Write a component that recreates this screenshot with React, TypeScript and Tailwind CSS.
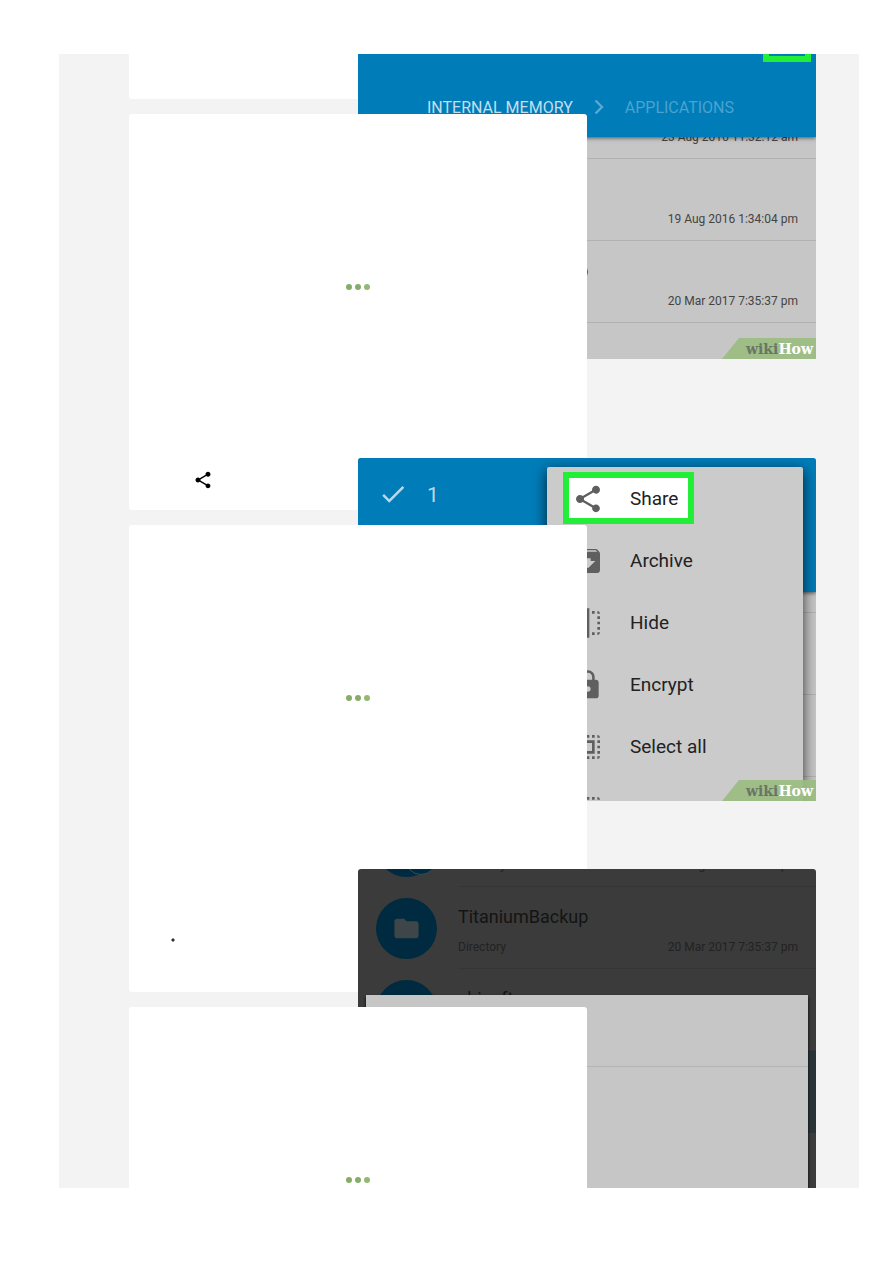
import type { ReactNode } from "react";
import {
  MdArchive,
  MdCheck,
  MdFlip,
  MdFolder,
  MdLock,
  MdSelectAll,
  MdShare,
} from "react-icons/md";

function LoadingDots() {
  return (
    <div className="flex h-[346px] items-center justify-center gap-[3px]" role="status" aria-label="Loading">
      <span className="size-[6px] rounded-full bg-[#86ad68]" />
      <span className="size-[6px] rounded-full bg-[#86ad68]" />
      <span className="size-[6px] rounded-full bg-[#93b874]" />
    </div>
  );
}

function Watermark() {
  return (
    <div className="absolute right-0 bottom-0 z-20 flex h-[21px] w-[94px] items-center justify-end bg-[#9abd80]/90 pr-[3px] font-['DejaVu_Serif',serif] text-[14px] leading-[20px] font-bold [clip-path:polygon(17px_0,100%_0,100%_100%,0_100%)]">
      <span className="text-[#6b7565]">wiki</span>
      <span className="text-white">How</span>
    </div>
  );
}

type FileRowProps = { name?: string; kind?: string; date?: string; folder?: boolean; badge?: boolean };

function FileRow({ name, kind, date, folder, badge }: FileRowProps) {
  return (
    <li className="flex h-[82px] shrink-0 items-center">
      <div className="w-[100px] shrink-0 pl-[18px]">
        {folder && (
          <div className="relative flex size-[61px] items-center justify-center rounded-full bg-[#002a40] text-[#3f4649]">
            <MdFolder className="size-[29px]" />
            {badge && (
              <span className="absolute right-0 bottom-[2px] size-[32px] rounded-full border border-[#3b4c55] bg-[#002a40]" />
            )}
          </div>
        )}
      </div>
      <div className="flex h-full flex-1 flex-col justify-end border-b border-black/10 pr-[18px] pb-[13px]">
        <span className="h-[24px] text-[18px] leading-[24px] text-[#141414]">{name}</span>
        <div className="mt-[10px] flex h-[16px] justify-between text-[12px] leading-[16px]">
          <span>{kind}</span>
          <span>{date}</span>
        </div>
      </div>
    </li>
  );
}

function BrowseIllustration() {
  return (
    <figure className="absolute top-0 left-1/2 isolate flex h-[305px] w-full flex-col overflow-hidden bg-[#c6c6c6] font-[Roboto,sans-serif]">
      <div className="relative z-10 flex h-[83px] shrink-0 items-end bg-[#007cb8] pb-[19px] pl-[69px] text-[16px] leading-[20px] shadow-[0_1px_4px_rgba(0,0,0,0.6)]">
        <span className="text-[#c3dfee]">INTERNAL MEMORY</span>
        <svg className="mx-[16px] h-[20px] w-[20px] text-[#58aad2]" viewBox="0 0 20 20" fill="none" aria-hidden="true">
          <path d="M6.5 2.5 13 9 6.5 15.5" stroke="currentColor" strokeWidth="2.4" />
        </svg>
        <span className="text-[#4ba3cf]">APPLICATIONS</span>
        <span className="absolute top-0 right-[5px] h-[8px] w-[48px] border-x-[6px] border-b-[6px] border-[#22ee38]" />
      </div>
      <ul className="flex flex-1 flex-col justify-end overflow-hidden pb-[36px] text-[#444]">
        <FileRow date="23 Aug 2016 11:32:12 am" />
        <FileRow date="19 Aug 2016 1:34:04 pm" />
        <FileRow name="TitaniumBackup" date="20 Mar 2017 7:35:37 pm" />
      </ul>
      <Watermark />
    </figure>
  );
}

const menu = [
  { label: "Share", Icon: MdShare },
  { label: "Archive", Icon: MdArchive },
  { label: "Hide", Icon: MdFlip },
  { label: "Encrypt", Icon: MdLock },
  { label: "Select all", Icon: MdSelectAll },
  { label: "Select none", Icon: MdSelectAll },
];

function MenuIllustration() {
  return (
    <figure className="absolute top-[344px] left-1/2 isolate h-[343px] w-full overflow-hidden rounded-t-[3px] bg-[#c6c6c6] font-[Roboto,sans-serif]">
      <div className="relative z-10 flex h-[134px] items-start bg-[#007cb8] pt-[21px] pl-[20px] text-[#b9d9ea] shadow-[0_1px_4px_rgba(0,0,0,0.6)]">
        <MdCheck className="size-[30px]" />
        <span className="ml-[19px] text-[21px] leading-[32px]">1</span>
      </div>
      <div className="h-[21px] border-b border-black/10" />
      <div className="h-[82px] border-b border-black/10" />
      <div className="h-[82px] border-b border-black/10" />
      <ul className="absolute top-[9px] right-[13px] z-10 w-[256px] rounded-[2px] bg-[#cbcbcb] pt-[1px] shadow-[0_4px_14px_rgba(0,0,0,0.75)]">
        {menu.map(({ label, Icon }, i) => (
          <li key={label} className="relative h-[62px]">
            {i === 0 && (
              <span className="absolute top-[4px] left-[16px] h-[52px] w-[131px] border-[6px] border-[#22ee38] bg-white" />
            )}
            <button className="relative flex h-full w-full items-center gap-[26px] pl-[25px] text-[19px] leading-[24px] text-[#222]">
              <Icon className="size-[32px] text-[#5f5f5f]" />
              {label}
            </button>
          </li>
        ))}
      </ul>
      <Watermark />
    </figure>
  );
}

function DialogIllustration() {
  return (
    <figure className="absolute top-[344px] left-1/2 isolate h-[343px] w-full overflow-hidden rounded-t-[3px] bg-[#3b3b3b] font-[Roboto,sans-serif]">
      <ul className="flex h-[182px] flex-col justify-end text-[#222]">
        <FileRow folder badge kind="Directory" date="19 Aug 2016 1:34:04 pm" />
        <FileRow folder name="TitaniumBackup" kind="Directory" date="20 Mar 2017 7:35:37 pm" />
        <FileRow folder name="shisoft" />
      </ul>
      <div className="h-[82px] bg-[#2a3438]" />
      <div className="absolute inset-x-[8px] top-[126px] bottom-0 bg-[#c6c6c6] shadow-[0_2px_3px_rgba(0,0,0,0.9)]">
        <div className="h-[72px] border-b border-[#b4b4b4]" />
      </div>
    </figure>
  );
}

function Step({ className, children }: { className: string; children: ReactNode }) {
  return <li className={`relative bg-white ${className}`}>{children}</li>;
}

export default function App() {
  return (
    <main className="bg-white pt-[54px] pr-[34px] pb-[75px] pl-[59px]">
      <section className="overflow-hidden bg-[#f3f3f3] pr-[272px] pl-[70px]">
        <ol className="flex flex-col gap-[15px]">
          <Step className="h-[45px] rounded-b-[3px]">
            <BrowseIllustration />
          </Step>
          <Step className="h-[396px] rounded-[3px]">
            <LoadingDots />
            <MdShare className="mt-[10px] ml-[64px] size-[20px] text-black" />
            <MenuIllustration />
          </Step>
          <Step className="h-[467px] rounded-[3px]">
            <LoadingDots />
            <svg className="mt-[67px] ml-[42px] size-[4px]" viewBox="0 0 4 4" aria-hidden="true">
              <path d="M2 0 4 2 2 4 0 2Z" fill="#333" />
            </svg>
            <DialogIllustration />
          </Step>
          <Step className="h-[181px] rounded-t-[3px]">
            <LoadingDots />
          </Step>
        </ol>
      </section>
    </main>
  );
}
